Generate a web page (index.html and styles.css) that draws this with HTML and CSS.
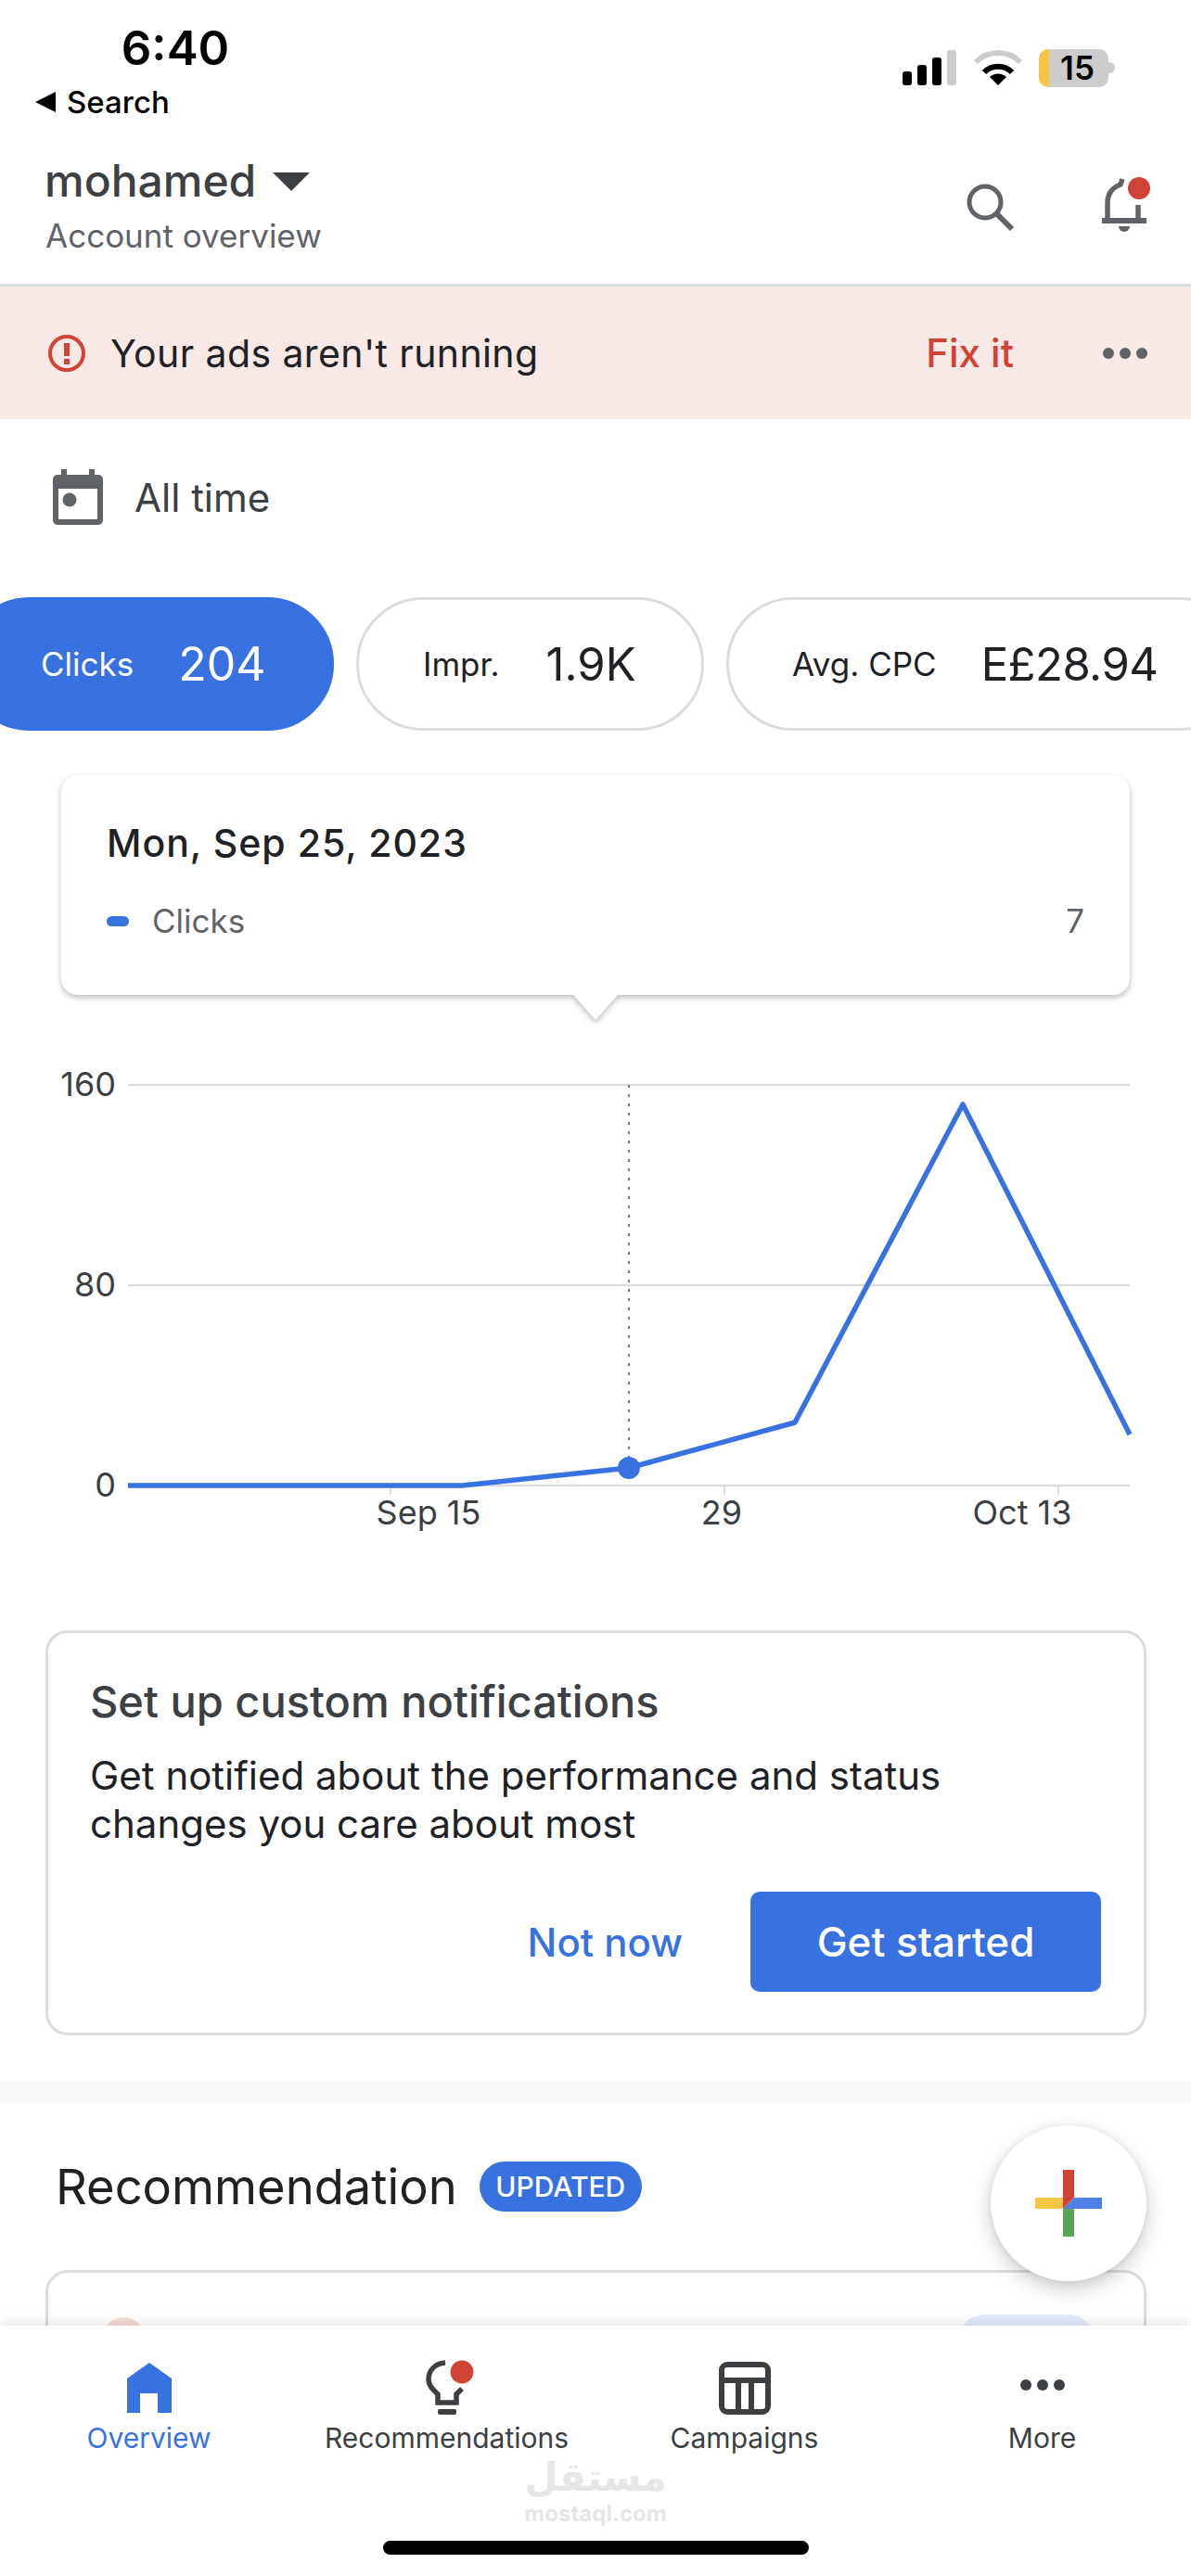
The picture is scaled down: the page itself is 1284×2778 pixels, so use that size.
FILE: index.html
```html
<!DOCTYPE html>
<html lang="en">
<head>
	<meta charset="UTF-8">
	<meta name="viewport" content="width=device-width, initial-scale=1.0">
	<title>Account overview</title>
	<link rel="stylesheet" href="styles.css">
</head>
<body>
<div class="phone">
	<div class="status">
		<div class="status-left">
			<div class="time">6:40</div>
			<div class="back"><span class="back-arrow"></span>Search</div>
		</div>
		<div class="status-right">
			<svg class="signal" width="58" height="38" viewBox="0 0 58 38">
				<rect x="0" y="23" width="10" height="15" rx="3" fill="#000"/>
				<rect x="16" y="16" width="10" height="22" rx="3" fill="#000"/>
				<rect x="32" y="8" width="10" height="30" rx="3" fill="#000"/>
				<rect x="48" y="0" width="10" height="38" rx="3" fill="#ccc"/>
			</svg>
			<svg class="wifi" width="52" height="38" viewBox="0 0 52 38">
				<path d="M2 13 A34 34 0 0 1 50 13" fill="none" stroke="#ccc" stroke-width="6"/>
				<path d="M11 24 A21 21 0 0 1 41 24" fill="none" stroke="#000" stroke-width="6"/>
				<path d="M17 29 A13 13 0 0 1 35 29 L26 38 Z" fill="#000"/>
			</svg>
			<div class="battery"><span>15</span></div>
			<div class="battery-tip"></div>
		</div>
	</div>

	<div class="header">
		<div>
			<div class="account">mohamed<span class="caret"></span></div>
			<div class="account-sub">Account overview</div>
		</div>
		<div class="header-icons">
			<svg width="56" height="56" viewBox="0 0 56 56">
				<circle cx="22" cy="22" r="17" fill="none" stroke="#5f6368" stroke-width="5"/>
				<path d="M34 34 L51 51" stroke="#5f6368" stroke-width="6"/>
			</svg>
			<svg width="56" height="64" viewBox="0 0 56 64">
				<path d="M8 45 V28 C8 17 14 11 22 8 L24 2" fill="none" stroke="#5f6368" stroke-width="5.5"/>
				<path d="M41 30 V45" stroke="#5f6368" stroke-width="5.5"/>
				<rect x="2" y="44" width="48" height="6" fill="#5f6368"/>
				<path d="M20 53 H32 A6 6 0 0 1 20 53 Z" fill="#5f6368"/>
				<circle cx="42" cy="12" r="12" fill="#d04437"/>
			</svg>
		</div>
	</div>

	<div class="banner">
		<svg class="alert-icon" width="42" height="42" viewBox="0 0 42 42">
			<circle cx="21" cy="21" r="18" fill="none" stroke="#d04437" stroke-width="4"/>
			<rect x="18" y="10" width="6" height="14" fill="#d04437"/>
			<rect x="18" y="27" width="6" height="6" fill="#d04437"/>
		</svg>
		<div class="banner-text">Your ads aren't running</div>
		<div class="fix-link">Fix it</div>
		<div class="dots"><i></i><i></i><i></i></div>
	</div>

	<div class="date-range">
		<svg width="54" height="60" viewBox="0 0 54 60">
			<path d="M9 0 H15 V6 H39 V0 H45 V6 H49 A5 5 0 0 1 54 11 V55 A5 5 0 0 1 49 60 H5 A5 5 0 0 1 0 55 V11 A5 5 0 0 1 5 6 H9 Z" fill="#5f6368"/>
			<rect x="6" y="21" width="42" height="33" fill="#fff"/>
			<circle cx="18" cy="33" r="7.5" fill="#5f6368"/>
		</svg>
		<span>All time</span>
	</div>

	<div class="pills">
		<div class="pill pill-active"><span class="pill-label">Clicks</span><span class="pill-value">204</span></div>
		<div class="pill pill-impr"><span class="pill-label">Impr.</span><span class="pill-value">1.9K</span></div>
		<div class="pill pill-cpc"><span class="pill-label">Avg. CPC</span><span class="pill-value">E£28.94</span></div>
	</div>

	<div class="tooltip">
		<div class="tooltip-date">Mon, Sep 25, 2023</div>
		<div class="tooltip-row">
			<span class="legend-mark"></span>
			<span class="legend-name">Clicks</span>
			<span class="legend-value">7</span>
		</div>
	</div>

	<svg class="chart" width="1284" height="600" viewBox="0 1100 1284 600">
		<g stroke="#dadce0" stroke-width="2.5">
			<path d="M138 1170 H1218"/>
			<path d="M138 1386 H1218"/>
			<path d="M138 1602 H1218"/>
			<path d="M421 1602 V1612 M781 1602 V1612 M1141 1602 V1612" stroke-width="2"/>
		</g>
		<path d="M678 1170 V1583" stroke="#70757a" stroke-width="2" stroke-dasharray="3 7"/>
		<polyline points="138,1602 498,1602 678,1583 857,1534 1038,1191 1218,1547" fill="none" stroke="#3871e0" stroke-width="5.5" stroke-linejoin="round"/>
		<circle cx="678" cy="1583" r="12" fill="#3871e0"/>
		<g class="axis-y">
			<text x="125" y="1182">160</text>
			<text x="125" y="1398">80</text>
			<text x="125" y="1614">0</text>
		</g>
		<g class="axis-x">
			<text x="462" y="1644">Sep 15</text>
			<text x="778" y="1644">29</text>
			<text x="1102" y="1644">Oct 13</text>
		</g>
	</svg>

	<div class="notify-card">
		<div class="notify-title">Set up custom notifications</div>
		<div class="notify-body">Get notified about the performance and status<br>changes you care about most</div>
		<div class="notify-actions">
			<span class="btn-text">Not now</span>
			<span class="btn-primary">Get started</span>
		</div>
	</div>

	<div class="band"></div>

	<div class="rec-section">
		<div class="rec-head">
			<span class="rec-title">Recommendation</span>
			<span class="rec-badge">UPDATED</span>
		</div>
		<div class="rec-card">
			<span class="rec-icon"></span>
			<span class="rec-chip"></span>
		</div>
	</div>

	<div class="fab">
		<svg width="72" height="72" viewBox="0 0 72 72">
			<rect x="0" y="30" width="30" height="12" fill="#f4c542"/>
			<rect x="30" y="42" width="12" height="30" fill="#5aa65a"/>
			<polygon points="42,30 72,30 72,42 30,42" fill="#4f7fe6"/>
			<polygon points="30,0 42,0 42,30 30,42" fill="#d04437"/>
		</svg>
	</div>

	<div class="nav">
		<div class="tabs">
			<div class="tab tab-active">
				<svg width="50" height="58" viewBox="0 0 50 58">
					<path d="M25 2 L49 19 V56 H34 V35 H15 V56 H1 V19 Z" fill="#3871e0"/>
				</svg>
				<span>Overview</span>
			</div>
			<div class="tab">
				<svg width="56" height="62" viewBox="0 0 56 62">
					<path d="M22 4 C10 5 4 13 4 22 C4 29 9 33 14 38 V47 H34 V38 L40 32" fill="none" stroke="#3c4043" stroke-width="5.5"/>
					<rect x="14" y="54" width="20" height="6" rx="2" fill="#3c4043"/>
					<circle cx="40" cy="14" r="12.5" fill="#d04437"/>
				</svg>
				<span>Recommendations</span>
			</div>
			<div class="tab">
				<svg width="56" height="58" viewBox="0 0 56 58">
					<rect x="3" y="4" width="50" height="51" rx="6" fill="none" stroke="#3c4043" stroke-width="6"/>
					<path d="M3 21 H53 M21 21 V55 M35 21 V55" stroke="#3c4043" stroke-width="6"/>
				</svg>
				<span>Campaigns</span>
			</div>
			<div class="tab">
				<div class="tab-dots"><div class="dots dots-dark"><i></i><i></i><i></i></div></div>
				<span>More</span>
			</div>
		</div>
		<div class="watermark">
			<div class="wm-ar" lang="ar" dir="rtl">مستقل</div>
			<div class="wm-en">mostaql.com</div>
		</div>
		<div class="home-bar"></div>
	</div>
</div>
</body>
</html>
```

FILE: styles.css
```css
*{margin: 0; padding: 0; box-sizing: border-box;}
body{background: #fff; font-family: "Inter", "Liberation Sans", sans-serif; color: #202124;}

.phone{position: relative; width: 1284px; height: 2778px; overflow: hidden; display: flex; flex-direction: column; background: #fff;}

/* status bar */
.status{height: 142px; flex: none; display: flex; justify-content: space-between; color: #000;}
.status-left{padding-top: 22px;}
.time{width: 378px; height: 60px; line-height: 60px; text-align: center; font-size: 51px; font-weight: 600;}
.back{display: flex; align-items: center; height: 40px; margin-top: 8px; padding-left: 38px; font-size: 33px; font-weight: 500;}
.back-arrow{width: 0; height: 0; margin-right: 12px; border-style: solid; border-width: 11px 22px 11px 0; border-color: transparent #000 transparent transparent;}
.status-right{display: flex; align-items: center; height: 40px; margin-top: 53px; padding-right: 82px;}
.signal{margin-right: 19px;}
.wifi{margin-right: 18px;}
.battery{width: 75px; height: 41px; border-radius: 10px; background: linear-gradient(90deg, #f4c542 0, #f4c542 11px, #ccc 11px); text-align: center; font-size: 35px; line-height: 41px; font-weight: 600; padding-left: 8px;}
.battery-tip{width: 7px; height: 12px; background: #ccc; border-radius: 0 6px 6px 0;}

/* header */
.header{height: 167px; flex: none; display: flex; justify-content: space-between; border-bottom: 3px solid #dadce0; padding: 24px 42px 0 48px;}
.account{display: flex; align-items: center; height: 56px; font-size: 48px; font-weight: 500; color: #3c4043;}
.caret{width: 0; height: 0; margin-left: 18px; margin-top: 4px; border-style: solid; border-width: 20px 20px 0 20px; border-color: #3c4043 transparent transparent transparent;}
.account-sub{margin-top: 10px; padding-left: 1px; font-size: 35px; line-height: 44px; color: #5f6368;}
.header-icons{display: flex; align-items: flex-start; gap: 90px; padding-top: 25px;}
.header-icons svg:first-child{margin-top: 5px;}

/* banner */
.banner{height: 143px; flex: none; display: flex; align-items: center; background: #f8e8e6; padding: 0 47px 0 51px;}
.alert-icon{margin-right: 26px;}
.banner-text{flex: 1; font-size: 41px; letter-spacing: .4px; color: #202124;}
.fix-link{margin-right: 96px; font-size: 42px; font-weight: 500; color: #d04437;}
.dots{display: flex; gap: 6px;}
.dots i{display: block; width: 12px; height: 12px; border-radius: 50%; background: #5f6368;}
.dots-dark i{background: #3c4043;}

.date-range{height: 192px; flex: none; display: flex; align-items: center; gap: 34px; padding-left: 57px; padding-bottom: 24px; font-size: 42px; color: #3c4043;}

/* metric pills */
.pills{height: 144px; flex: none; display: flex; gap: 24px; margin-left: -40px; width: 1500px;}
.pill{height: 144px; flex: none; display: flex; align-items: center; border: 3px solid #dadce0; border-radius: 72px; color: #202124;}
.pill-active{width: 400px; padding-left: 81px; gap: 48px; background: #3871e0; border-color: #3871e0; color: #fff;}
.pill-impr{width: 375px; padding-left: 69px; gap: 50px;}
.pill-cpc{width: 560px; padding-left: 68px; gap: 48px;}
.pill-label{font-size: 35px;}
.pill-value{font-size: 49px;}
.pill-active .pill-value{font-size: 50px;}
.pill-cpc .pill-value{letter-spacing: -.5px;}

/* chart tooltip */
.tooltip{position: relative; flex: none; height: 237px; margin: 48px 66px 0; padding: 46px 49px 0; background: #fff; border-radius: 18px; filter: drop-shadow(0 3px 3px rgba(60,64,67,.35));}
.tooltip::after{content: ""; position: absolute; left: 552px; bottom: -27px; width: 48px; height: 27px; background: #fff; clip-path: polygon(0 0, 100% 0, 50% 100%);}
.tooltip-date{font-size: 41px; line-height: 54px; font-weight: 500; letter-spacing: 1px; color: #202124;}
.tooltip-row{display: flex; align-items: center; margin-top: 35px; font-size: 35px; line-height: 44px;}
.legend-mark{width: 24px; height: 11px; margin-right: 25px; border-radius: 6px; background: #3871e0;}
.legend-name{flex: 1; color: #5f6368;}
.legend-value{color: #5f6368;}

.chart{display: block; flex: none; margin-top: 27px;}
.chart text{font-family: "Inter", "Liberation Sans", sans-serif; font-size: 36px; fill: #3c4043;}
.axis-y text{text-anchor: end;}
.axis-x text{text-anchor: middle;}

/* notification card */
.notify-card{flex: none; height: 437px; margin: 58px 48px 0 49px; padding: 46px 46px 0 45px; border: 3px solid #dadce0; border-radius: 24px;}
.notify-title{font-size: 47px; line-height: 56px; font-weight: 500; color: #3c4043;}
.notify-body{margin-top: 26px; font-size: 42px; line-height: 52px; color: #202124;}
.notify-actions{display: flex; justify-content: flex-end; align-items: center; gap: 73px; margin-top: 47px;}
.btn-text{font-size: 42px; font-weight: 500; color: #3871e0;}
.btn-primary{width: 378px; height: 108px; line-height: 108px; text-align: center; border-radius: 10px; background: #3871e0; color: #fff; font-size: 44px; font-weight: 500;}

.band{flex: none; height: 24px; margin-top: 49px; background: #f8f9fa;}

/* recommendation */
.rec-section{flex: 1; min-height: 0; overflow: hidden; padding: 0 48px 0 49px;}
.rec-head{display: flex; align-items: center; height: 180px; padding-left: 11px; gap: 24px;}
.rec-title{font-size: 52.5px; color: #202124;}
.rec-badge{height: 54px; width: 175px; line-height: 54px; text-align: center; border-radius: 27px; background: #3871e0; color: #fff; font-size: 30px; font-weight: 500;}
.rec-card{display: flex; justify-content: space-between; align-items: flex-start; height: 300px; padding: 48px 55px 0 58px; border: 3px solid #dadce0; border-radius: 24px;}
.rec-icon{width: 46px; height: 46px; border-radius: 50%; background: #f8dcd6;}
.rec-chip{width: 143px; height: 50px; margin-top: -3px; border-radius: 25px; background: #e3ecfb;}

.fab{position: absolute; left: 1068px; top: 2292px; width: 168px; height: 168px; display: flex; align-items: center; justify-content: center; border-radius: 50%; background: #fff; box-shadow: 0 8px 20px rgba(60,64,67,.28), 0 0 6px rgba(60,64,67,.08); z-index: 3;}

/* bottom nav */
.nav{flex: none; position: relative; z-index: 2; height: 270px; background: #fff; box-shadow: 0 -3px 12px rgba(60,64,67,.14); display: flex; flex-direction: column; align-items: center;}
.tabs{display: grid; grid-template-columns: repeat(4, 321px); width: 1284px; height: 142px;}
.tab{display: flex; flex-direction: column; align-items: center; font-size: 30px; line-height: 40px; color: #3c4043;}
.tab svg, .tab-dots{height: 62px; margin-top: 36px; margin-bottom: 3px;}
.tab:nth-child(2) svg{margin-left: 8px;}
.tab-dots{display: flex; align-items: center; padding-bottom: 6px;}
.tab-active{color: #3871e0;}
.watermark{width: 170px; height: 78px; text-align: center; color: #e6e6e6; font-weight: 700;}
.wm-ar{font-family: "DejaVu Sans", sans-serif; font-size: 42px; line-height: 44px;}
.wm-en{margin-top: 6px; font-size: 24px; line-height: 22px; white-space: nowrap;}
.home-bar{width: 459px; height: 15px; margin-top: 12px; border-radius: 8px; background: #000;}
```
